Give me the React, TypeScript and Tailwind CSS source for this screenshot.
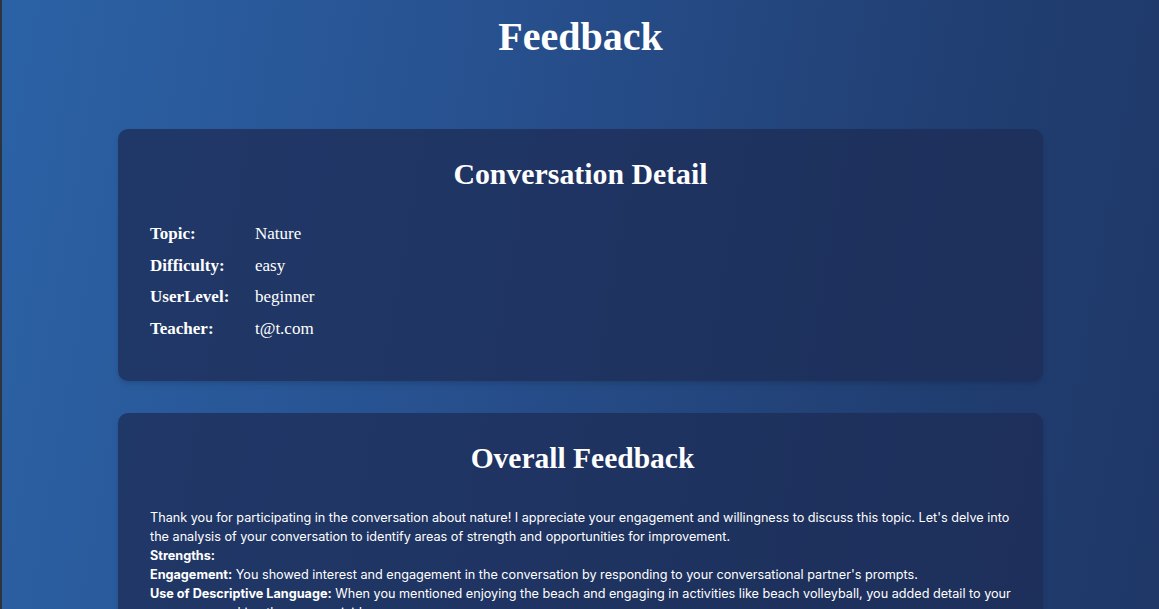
import React from "react";

const heading = { fontFamily: '"Liberation Serif", "DejaVu Serif", serif' };

export default function App() {
  const rows: [string, string][] = [
    ["Topic:", "Nature"],
    ["Difficulty:", "easy"],
    ["UserLevel:", "beginner"],
    ["Teacher:", "t@t.com"],
  ];
  return (
    <div
      className="min-h-screen w-full border-l-2 border-[#2c3440] bg-[linear-gradient(100deg,#2b62a6_0%,#27508e_40%,#213f73_75%,#1e3767_100%)] text-white"
      style={{ fontFamily: 'Inter, "Liberation Sans", sans-serif' }}
    >
      <div className="flex flex-col items-center pt-[13px]">
        <h1 className="text-[40px] font-bold leading-[48px]" style={heading}>
          Feedback
        </h1>
      </div>
      <div className="mx-auto mt-[68px] flex w-[925px] flex-col gap-8">
        <section className="rounded-[10px] bg-[#1d2c55]/75 px-8 pb-[42px] pt-[25px] shadow-md">
          <h2 className="text-center text-[29.8px] font-bold leading-[40px]" style={heading}>
            Conversation Detail
          </h2>
          <div className="mt-[30px] flex flex-col gap-[11.7px]" style={heading}>
            {rows.map(([k, v]) => (
              <div key={k} className="flex text-[17px] leading-[20px]">
                <span className="w-[105px] font-bold">{k}</span>
                <span>{v}</span>
              </div>
            ))}
          </div>
        </section>
        <section className="rounded-[10px] bg-[#1d2c55]/75 pb-8 pl-8 pr-[28px] pt-[25px] shadow-md">
          <h2 className="text-center text-[29.5px] font-bold leading-[40px]" style={heading}>
            Overall Feedback
          </h2>
          <div className="mt-[30px] text-[12.65px] leading-[19px]">
            <p>
              Thank you for participating in the conversation about nature! I appreciate your engagement and
              willingness to discuss this topic. Let's delve into the analysis of your conversation to identify
              areas of strength and opportunities for improvement.
            </p>
            <p className="font-bold">Strengths:</p>
            <p>
              <b>Engagement:</b> You showed interest and engagement in the conversation by responding to your
              conversational partner's prompts.
            </p>
            <p>
              <b>Use of Descriptive Language:</b> When you mentioned enjoying the beach and engaging in activities
              like beach volleyball, you added detail to your responses, making them more vivid.
            </p>
            <p>
              <b>Areas for Improvement:</b>
            </p>
          </div>
        </section>
      </div>
    </div>
  );
}
